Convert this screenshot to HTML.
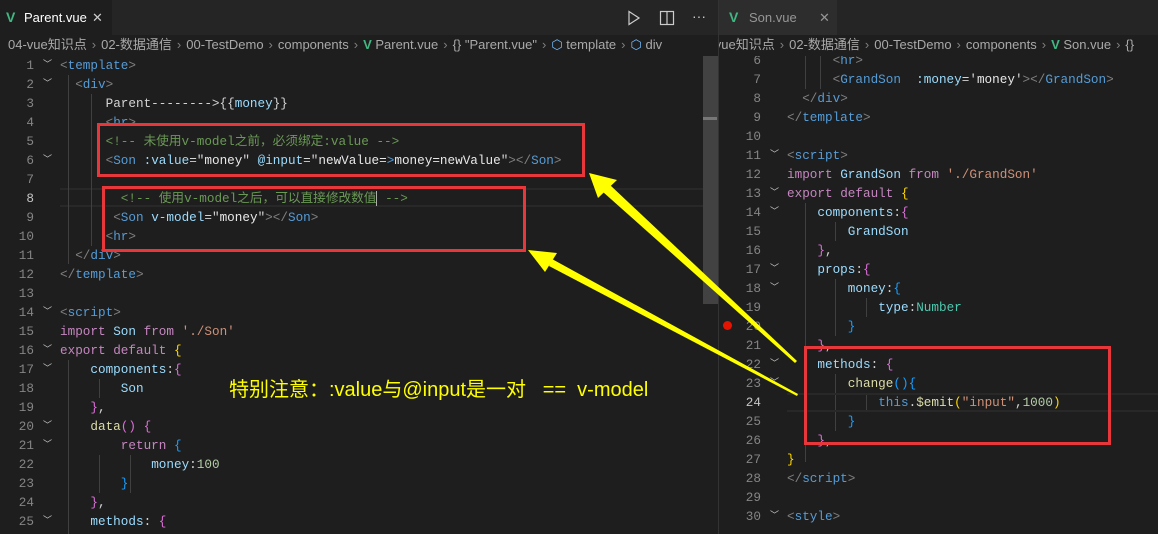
<!DOCTYPE html>
<html><head><meta charset="utf-8"><style>
*{margin:0;padding:0;box-sizing:border-box}
body{width:1158px;height:534px;background:#1e1e1e;overflow:hidden;position:relative;font-family:"Liberation Mono","Noto Sans CJK SC",monospace;}
.pane{position:absolute;top:0;height:534px;overflow:hidden;background:#1e1e1e}
.tabbar{position:absolute;left:0;top:0;right:0;height:35px;background:#252526;z-index:5}
.tab{position:absolute;top:0;height:35px;font:13px "Liberation Sans","Noto Sans CJK SC",sans-serif;line-height:35px}
.bc{position:absolute;left:0;top:35px;right:0;height:21px;background:#1e1e1e;z-index:5;font:13px "Liberation Sans","Noto Sans CJK SC",sans-serif;color:#a9a9a9;line-height:20px;white-space:nowrap;overflow:hidden}
.bc .s{color:#808080;margin:0 5px}
.v{color:#41b883;font-weight:bold;font-family:"Liberation Sans",sans-serif}
.ln{position:absolute;height:19px;line-height:19px;font-size:12.67px;white-space:pre;color:#d4d4d4}
.num{position:absolute;height:19px;line-height:19px;font-size:12.67px;color:#858585;text-align:right;width:30px}
.chev{position:absolute;height:19px;line-height:19px;font-size:9px;color:#c5c5c5;font-family:"DejaVu Sans",sans-serif}
.g{color:#808080}.t{color:#569cd6}.a{color:#9cdcfe}.w{color:#d4d4d4}.c{color:#6a9955}.s1{color:#ce9178}.k{color:#c586c0}.y{color:#ffd700}.p{color:#da70d6}.b{color:#179fff}.tc{color:#4ec9b0}.f{color:#dcdcaa}.n{color:#b5cea8}.vv{color:#e8e8e8}
.guide{position:absolute;width:1px;background:#404040}
.box{position:absolute;border:3px solid #e8373b}
</style></head><body>

<div class="pane" style="left:0;width:718px">
  <div class="tabbar">
    <div class="tab" style="left:0;width:112px;background:#1e1e1e;color:#fff"><span class="v" style="position:absolute;left:6px;font-size:14px">V</span><span style="position:absolute;left:24px">Parent.vue</span><span style="position:absolute;left:92px;color:#ccc">✕</span></div>
    <svg style="position:absolute;left:626px;top:10px" width="16" height="16"><path d="M3 1.5 L13 8 L3 14.5Z" fill="none" stroke="#ccc" stroke-width="1.2"/></svg>
    <svg style="position:absolute;left:659px;top:10px" width="16" height="16"><rect x="1.5" y="1.5" width="13" height="13" fill="none" stroke="#ccc" stroke-width="1.2"/><line x1="8" y1="1.5" x2="8" y2="14.5" stroke="#ccc" stroke-width="1.2"/></svg>
    <div style="position:absolute;left:692px;top:0;color:#ccc;font:14px 'Liberation Sans';line-height:33px">···</div>
  </div>
  <div class="bc"><span style="margin-left:8px">04-vue知识点</span><span class="s">›</span>02-数据通信<span class="s">›</span>00-TestDemo<span class="s">›</span>components<span class="s">›</span><span class="v">V</span> Parent.vue<span class="s">›</span>{} "Parent.vue"<span class="s">›</span><span style="color:#75beff">⬡</span> template<span class="s">›</span><span style="color:#75beff">⬡</span> div</div>
  <div style="position:absolute;left:60px;top:188px;width:643px;height:19px;border-top:2px solid #282828;border-bottom:2px solid #282828"></div>
  <div class="guide" style="left:68px;top:75px;height:189px"></div>
  <div class="guide" style="left:91px;top:94px;height:152px"></div>
  <div class="guide" style="left:99px;top:379px;height:19px"></div>
  <div class="guide" style="left:99px;top:455px;height:38px"></div>
  <div class="guide" style="left:130px;top:455px;height:38px"></div>
  <div class="guide" style="left:68px;top:360px;height:174px"></div>
  <div id="L"></div>
  <div style="position:absolute;left:703px;top:55px;width:15px;height:249px;background:#424242"></div>
  <div style="position:absolute;left:703px;top:117px;width:14px;height:3px;background:#777"></div>
</div>

<div class="pane" style="left:718px;width:440px;border-left:1px solid #333">
  <div id="R"></div>
  <div style="position:absolute;left:68px;top:393px;width:372px;height:19px;border-top:2px solid #282828;border-bottom:2px solid #282828"></div>
  <div class="tabbar">
    <div class="tab" style="left:0;width:118px;background:#2d2d2d;color:#969696"><span class="v" style="position:absolute;left:10px;font-size:14px">V</span><span style="position:absolute;left:30px">Son.vue</span><span style="position:absolute;left:100px">✕</span></div>
  </div>
  <div class="bc"><span style="margin-left:-23px">04-vue知识点</span><span class="s">›</span>02-数据通信<span class="s">›</span>00-TestDemo<span class="s">›</span>components<span class="s">›</span><span class="v">V</span> Son.vue<span class="s">›</span>{}</div>
  <div style="position:absolute;left:4px;top:321px;width:9px;height:9px;border-radius:50%;background:#e51400"></div>
</div>

<div class="box" style="left:97px;top:123px;width:488px;height:54px"></div>
<div class="box" style="left:102px;top:186px;width:424px;height:66px"></div>
<div class="box" style="left:804px;top:346px;width:307px;height:99px"></div>

<svg style="position:absolute;left:0;top:0" width="1158" height="534">
<polygon points="589,173 617,180 598,198" fill="#ffff00"/>
<polygon points="610,185 603,192 795,363 797,361" fill="#ffff00"/>
<polygon points="528,250 557,253 545,272" fill="#ffff00"/>
<polygon points="552,259 549,266 797,396 798,394" fill="#ffff00"/>
</svg>
<div style="position:absolute;left:229px;top:373px;color:#ffff00;font:20px 'Liberation Sans','Noto Sans CJK SC',sans-serif;white-space:pre">特别注意：:value与@input是一对   ==  v-model</div>

<script>
const G=s=>'<span class="g">'+s+'</span>';
const T=s=>'<span class="t">'+s+'</span>';
const sp=(c,s)=>'<span class="'+c+'">'+s+'</span>';
const tag=(n,close)=>G(close?'&lt;/':'&lt;')+T(n)+G('&gt;');
const L=[
[1,1,0,tag('template')],
[2,1,2,tag('div')],
[3,0,6,sp('w','Parent--------&gt;{{')+sp('a','money')+sp('w','}}')],
[4,0,6,tag('hr')],
[5,0,6,sp('c','&lt;!-- 未使用v-model之前，必须绑定:value --&gt;')],
[6,1,6,G('&lt;')+T('Son')+' '+sp('a',':value')+sp('w','="')+sp('vv','money')+sp('w','"')+' '+sp('a','@input')+sp('w','="')+sp('vv','newValue=')+T('&gt;')+sp('vv','money=newValue')+sp('w','"')+G('&gt;&lt;/')+T('Son')+G('&gt;')],
[7,0,0,''],
[8,0,8,sp('c','&lt;!-- 使用v-model之后，可以直接修改数值')+'<span style="border-left:1px solid #aeafad"></span>'+sp('c',' --&gt;')],
[9,0,7,G('&lt;')+T('Son')+' '+sp('a','v-model')+sp('w','="')+sp('vv','money')+sp('w','"')+G('&gt;&lt;/')+T('Son')+G('&gt;')],
[10,0,6,tag('hr')],
[11,0,2,tag('div',1)],
[12,0,0,tag('template',1)],
[13,0,0,''],
[14,1,0,tag('script')],
[15,0,0,sp('k','import')+' '+sp('a','Son')+' '+sp('k','from')+' '+sp('s1',"'./Son'")],
[16,1,0,sp('k','export')+' '+sp('k','default')+' '+sp('y','{')],
[17,1,4,sp('a','components')+sp('w',':')+sp('p','{')],
[18,0,8,sp('a','Son')],
[19,0,4,sp('p','}')+sp('w',',')],
[20,1,4,sp('f','data')+sp('p','()')+' '+sp('p','{')],
[21,1,8,sp('k','return')+' '+sp('b','{')],
[22,0,12,sp('a','money')+sp('w',':')+sp('n','100')],
[23,0,8,sp('b','}')],
[24,0,4,sp('p','}')+sp('w',',')],
[25,1,4,sp('a','methods')+sp('w',': ')+sp('p','{')],
];
let h='';
for(const [n,ch,ind,code] of L){const top=56+(n-1)*19;
h+=`<div class="num" style="left:4px;top:${top}px;${n==8?'color:#c6c6c6':''}">${n}</div>`;
if(ch)h+=`<div class="chev" style="left:43px;top:${top}px">﹀</div>`;
h+=`<div class="ln" style="left:${60+ind*7.6}px;top:${top}px">${code}</div>`;}
document.getElementById('L').innerHTML=h;
const R=[
[6,0,6,tag('hr')],
[7,0,6,G('&lt;')+T('GrandSon')+'  '+sp('a',':money')+sp('w','=\'')+sp('vv','money')+sp('w','\'')+G('&gt;&lt;/')+T('GrandSon')+G('&gt;')],
[8,0,2,tag('div',1)],
[9,0,0,tag('template',1)],
[10,0,0,''],
[11,1,0,tag('script')],
[12,0,0,sp('k','import')+' '+sp('a','GrandSon')+' '+sp('k','from')+' '+sp('s1',"'./GrandSon'")],
[13,1,0,sp('k','export')+' '+sp('k','default')+' '+sp('y','{')],
[14,1,4,sp('a','components')+sp('w',':')+sp('p','{')],
[15,0,8,sp('a','GrandSon')],
[16,0,4,sp('p','}')+sp('w',',')],
[17,1,4,sp('a','props')+sp('w',':')+sp('p','{')],
[18,1,8,sp('a','money')+sp('w',':')+sp('b','{')],
[19,0,12,sp('a','type')+sp('w',':')+sp('tc','Number')],
[20,0,8,sp('b','}')],
[21,0,4,sp('p','}')+sp('w',',')],
[22,1,4,sp('a','methods')+sp('w',': ')+sp('p','{')],
[23,1,8,sp('f','change')+sp('b','()')+sp('b','{')],
[24,0,12,sp('t','this')+sp('w','.')+sp('f','$emit')+'<span style="border-bottom:1px solid #b89500">'+sp('y','(')+sp('s1','"input"')+sp('w',',')+sp('n','1000')+sp('y',')')+'</span>'],
[25,0,8,sp('b','}')],
[26,0,4,sp('p','}')+sp('w',',')],
[27,0,0,sp('y','}')],
[28,0,0,tag('script',1)],
[29,0,0,''],
[30,1,0,tag('style')],
];
h='';
h+='<div class="guide" style="left:86px;top:51px;height:38px"></div><div class="guide" style="left:101px;top:51px;height:38px"></div>';
h+='<div class="guide" style="left:86px;top:203px;height:259px"></div><div class="guide" style="left:116px;top:222px;height:19px"></div><div class="guide" style="left:116px;top:279px;height:57px"></div><div class="guide" style="left:147px;top:298px;height:19px"></div><div class="guide" style="left:116px;top:374px;height:57px"></div><div class="guide" style="left:147px;top:393px;height:19px"></div>';
for(const [n,ch,ind,code] of R){const top=51+(n-6)*19;
h+=`<div class="num" style="left:12px;top:${top}px;${n==24?'color:#c6c6c6':''}">${n}</div>`;
if(ch)h+=`<div class="chev" style="left:51px;top:${top}px">﹀</div>`;
h+=`<div class="ln" style="left:${68+ind*7.6}px;top:${top}px">${code}</div>`;}
document.getElementById('R').innerHTML=h;
</script>
</body></html>
